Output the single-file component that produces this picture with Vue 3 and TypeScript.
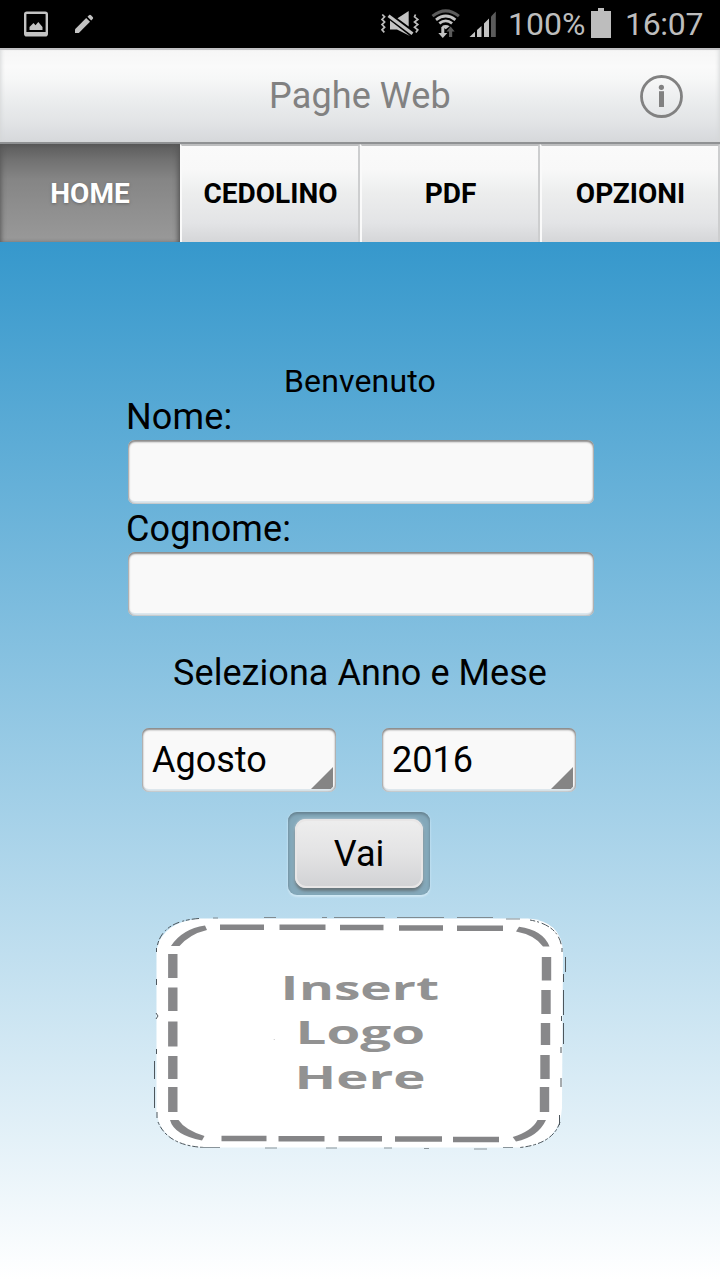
<script setup lang="ts">
import { ref } from 'vue'

const tabs: string[] = ['HOME', 'CEDOLINO', 'PDF', 'OPZIONI']
const active = ref<number>(0)
const nome = ref<string>('')
const cognome = ref<string>('')
const mese = ref<string>('Agosto')
const anno = ref<string>('2016')
</script>

<template>
  <div class="screen">
    <div class="status">
      <svg class="status-left" width="120" height="48" viewBox="0 0 120 48">
        <rect x="25.2" y="12.7" width="21.6" height="22.6" rx="1.6" fill="none" stroke="#c3c3c3" stroke-width="2.4" />
        <path d="M25 32h22v3.6H25z" fill="#c3c3c3" />
        <path d="M29.5 30v-3l4-4 2 2.2 2.8-3.2 4.2 5v3z" fill="#c3c3c3" />
        <path d="M75 29.2 86.2 18l3.8 3.8L78.800 33H75z" fill="#c3c3c3" />
        <path d="M87.500 16.800l1.500-1.500q1-.9 2 0l1.700 1.700q1 1 0 2l-1.500 1.500z" fill="#c3c3c3" />
      </svg>
      <svg class="status-right" width="130" height="48" viewBox="370 0 130 48">
        <g fill="none" stroke="#bdbdbd" stroke-width="1.700">
          <path d="M382.300 14.500l2.300 2.300-2.600 2.600 2.600 2.600-2.600 2.600 2.600 2.600-2.600 2.600 2.300 2.600" />
          <path d="M415.500 14.500l-1 2.300 3.300 2.600-3.300 2.600 3.300 2.600-3.300 2.600 3.300 2.600-2 2.600" />
        </g>
        <path d="M397.500 18.200l11.200-7.200v15.600z" fill="#c3c3c3" />
        <path d="M390 20.500l20 15.500-13-6.500h-7z" fill="#c3c3c3" />
        <path d="M388.500 15.700l24 18" stroke="#c3c3c3" stroke-width="3.200" />
        <path d="M432.500 16.200q13.200-10.600 26.400 0" stroke="#5b5b5b" stroke-width="3" fill="none" />
        <g fill="none" stroke="#c3c3c3" stroke-width="2.800">
          <path d="M436 19.800q9.700-7.600 19.400 0" />
          <path d="M439.300 23.400q6.400-5 12.800 0" />
        </g>
        <path d="M441.700 26.300q4-2.800 8 0l-4 3z" fill="#c3c3c3" />
        <path d="M441.300 27h3v6h3l-4.500 5-4.500-5h3z" fill="#c3c3c3" />
        <path d="M449 37h3.200v-5.500h2.500l-4.100-5-4.100 5H449z" fill="#5b5b5b" />
        <path d="M469.500 37l5.500-5.200V37zM477 30l4.500-4v11H477zM484 23.500l5-5V37h-5z" fill="#c3c3c3" />
        <path d="M491 16.500l4.800-5V37H491z" fill="#5b5b5b" />
      </svg>
      <span class="percent">100%</span>
      <svg class="battery" width="20" height="48" viewBox="0 0 20 48">
        <path d="M0 11h7V8h6v3h7v27H0z" fill="#bdbdbd" />
      </svg>
      <span class="clock">16:07</span>
    </div>

    <header class="header">
      <h1>Paghe Web</h1>
      <svg class="info" width="44" height="44" viewBox="0 0 44 44">
        <circle cx="21.500" cy="21.500" r="20" fill="none" stroke="#818181" stroke-width="2.800" />
        <circle cx="21.400" cy="12.300" r="2.600" fill="#818181" />
        <path d="M19 16.200h5v15.800h-5z" fill="#818181" />
      </svg>
    </header>

    <nav class="tabs">
      <button
        v-for="(tab, i) in tabs"
        :key="tab"
        type="button"
        class="tab"
        :class="{ active: active === i }"
        @click="active = i"
      >{{ tab }}</button>
    </nav>

    <main class="content">
      <p class="welcome">Benvenuto</p>
      <div class="form">
        <label for="nome">Nome:</label>
        <input id="nome" v-model="nome" type="text" class="field" />
        <label for="cognome">Cognome:</label>
        <input id="cognome" v-model="cognome" type="text" class="field" />
      </div>
      <p class="prompt">Seleziona Anno e Mese</p>
      <div class="selects">
        <div class="select">{{ mese }}</div>
        <div class="select">{{ anno }}</div>
      </div>
      <div class="go-frame">
        <button type="button" class="go">Vai</button>
      </div>
      <svg class="logo" width="440" height="260" viewBox="140 900 440 260">
        <path
          d="M200 918.500H528Q561 921 563 951L562 1108Q560 1144 520 1147.500H203Q161 1145 156.500 1112V950Q162 922 200 918.500Z"
          fill="#fff"
        />
        <g fill="none" stroke="#4d565c" stroke-width="1">
          <path d="M157.500 945Q163 921 199 918.500" stroke-dasharray="4 2 7 3 2 2" />
          <path d="M530 920Q558 925 561.500 946" stroke-dasharray="5 2 2 3 8 2" />
          <path d="M158 1122Q168 1146 205 1147.500" stroke-dasharray="3 2 6 2" />
          <path d="M560 1122Q553 1144 520 1147.500" stroke-dasharray="6 2 3 2" />
          <path d="M213 918h5M264 917.500h12M322 917.500h5M334 917.500h51M397 917.500h47M457 917.500h36M506 919h14" stroke="#808b91" />
          <path d="M200 1147.500h20M265 1148h12M326 1148h11M384 1148h8M424 1148.500h5M474 1149h13M503 1147.500h10" stroke="#89949a" />
          <path d="M156.500 948v4M156.500 979v6M156 1013l2 3-2 3M156.500 1049v5M154.500 1061v18M154.500 1087v21M157 1112v6" />
          <path d="M562 948v4M565.500 957v15M563.500 974v8M563.500 990v25M561.500 1016v5M563.500 1023v21M561 1047v6M561 1078v9M559.500 1115v10" />
        </g>
        <g fill="none" stroke="#858587" stroke-width="5.400">
          <path d="M220 927.300h44M279.500 927.300h46M340 927.500h43.500M399 928h44M457 928.300h46" />
          <path d="M221.500 1138.500h45M278.500 1138.700h46M338.500 1138.800h43.500M395 1139h47M453 1139.500h46" />
        </g>
        <g fill="none" stroke="#88888a" stroke-width="9.400">
          <path d="M172.800 954v24M172.800 987.500v23.500M172.800 1021.500v25M172.800 1056v23M172.800 1087v25" />
          <path d="M546.500 957v23.500M546 990v24M545.500 1023v22M545 1055v24M544.500 1087v25" />
        </g>
        <g fill="#858587">
          <path d="M171 946Q182 929 205 925.500L207 930Q190 934 179.500 946Z" />
          <path d="M519 926.800Q543 930 549.500 946.500H543Q535 935 516 931.500Z" />
          <path d="M170 1120H178.500Q185 1130 204.500 1136L202 1140.500Q174 1135 170 1120Z" />
          <path d="M537.500 1120H546Q538 1137 516 1141.500L512.700 1137Q532 1131 537.500 1120Z" />
        </g>
        <path d="M273 1040l2-1v1z" fill="#c8c8c8" />
        <g class="logo-text" fill="#929292">
          <text x="280.500" y="1000" class="logo-cap" textLength="18" lengthAdjust="spacingAndGlyphs">I</text>
          <text x="299" y="1000" textLength="140" lengthAdjust="spacingAndGlyphs">nsert</text>
          <text x="295.500" y="1044" textLength="129.500" lengthAdjust="spacingAndGlyphs">Logo</text>
          <text x="294.500" y="1088.500" textLength="131" lengthAdjust="spacingAndGlyphs">Here</text>
        </g>
      </svg>
    </main>
  </div>
</template>

<style>
body {
  margin: 0;
}
</style>

<style scoped>
.screen {
  width: 720px;
  height: 1280px;
  display: flex;
  flex-direction: column;
  overflow: hidden;
  font-family: Roboto, "Noto Sans", sans-serif;
  color: #000;
}

.status {
  flex: none;
  height: 48px;
  display: flex;
  align-items: center;
  background: #000;
  color: #bdbdbd;
  font-size: 32px;
  line-height: 48px;
}

.status-right {
  margin-left: 250px;
}

.percent {
  width: 83px;
  margin-left: 8px;
  white-space: nowrap;
}

.clock {
  margin-left: 14px;
  letter-spacing: -0.3px;
}

.header {
  box-sizing: border-box;
  flex: none;
  height: 96px;
  display: grid;
  grid-template-columns: 80px 1fr 80px;
  align-items: center;
  border-top: 2px solid #c2c1c4;
  border-bottom: 2px solid #8f9193;
  background: linear-gradient(#f6f6f6 0, #fafafa 18%, #f6f7f7 32%, #ebedee 55%, #e2e4e6 78%, #d6d8db 100%);
  box-shadow: inset 4px 0 4px -3px #d4d6d7, inset -4px 0 4px -3px #d4d6d7;
}

h1 {
  grid-column: 2;
  margin: 0;
  text-align: center;
  font-size: 36px;
  font-weight: 400;
  line-height: 48px;
  letter-spacing: 0.1px;
  color: #818181;
}

.info {
  margin-top: 1px;
}

.tabs {
  flex: none;
  height: 98px;
  display: grid;
  grid-template-columns: repeat(4, 1fr);
}

.tab {
  border: 0;
  border-top: 2px solid #bdbebf;
  border-left: 2px solid #fafafa;
  border-right: 2px solid #cdcecf;
  padding: 0 0 0 1px;
  background: linear-gradient(#fafafa, #f8f8f8 25%, #eceded 50%, #e3e4e6 80%, #d5d6d8);
  font: 700 28px/1 Roboto, "Noto Sans", sans-serif;
  color: #000;
}

.tab.active {
  border: 0;
  padding: 2px 0 0;
  background: linear-gradient(#5b5b5b, #717171 16%, #858585 36%, #909090 70%, #999);
  box-shadow: inset -4px 0 5px -2px #555, inset 4px 0 5px -3px #555;
  color: #fff;
  text-shadow: 0 1px 3px #666;
}

.content {
  flex: 1;
  display: flex;
  flex-direction: column;
  align-items: center;
  background: linear-gradient(#3698cc, #fff);
}

.welcome {
  margin: 120px 0 0;
  font-size: 32px;
  line-height: 38px;
  letter-spacing: 0.15px;
}

.form {
  width: 468px;
  display: flex;
  flex-direction: column;
}

label {
  margin-bottom: 6px;
  font-size: 36px;
  line-height: 34px;
  letter-spacing: 0.15px;
}

.field,
.select {
  box-sizing: border-box;
  border: 0;
  border-radius: 7px;
  background: #f9f9f9;
  box-shadow: inset 0 2px 2px #8c8c8c, inset 1px 0 2px #aaa, inset -1px 0 2px #aaa, inset 0 -3px 0 #dde7ed;
}

.field {
  width: 466px;
  height: 64px;
  margin: 0 0 8px 2px;
  padding: 0 10px;
  outline: none;
  font: 36px Roboto, "Noto Sans", sans-serif;
}

.prompt {
  margin: 28px 0 34px;
  font-size: 36px;
  line-height: 42px;
  letter-spacing: 0.05px;
}

.selects {
  display: flex;
  gap: 46px;
  margin-right: 2px;
}

.select {
  width: 194px;
  height: 64px;
  padding-left: 10px;
  font-size: 36px;
  line-height: 65px;
  position: relative;
}

.select::after {
  content: "";
  position: absolute;
  right: 3px;
  bottom: 3px;
  width: 22px;
  height: 22px;
  background: #858585;
  clip-path: polygon(100% 0, 100% 90%, 90% 100%, 0 100%);
}

.go-frame {
  box-sizing: border-box;
  width: 142px;
  height: 83px;
  margin: 20px 2px 0 0;
  padding: 7px;
  border-radius: 9px;
  background: #84a8ba;
  box-shadow: inset 0 2px 3px #65818f, 0 2px 2px #d0e8f5, 0 0 2px #c7e2f0;
}

.go {
  box-sizing: border-box;
  width: 128px;
  height: 69px;
  border: 0;
  border-radius: 11px;
  padding: 2px 0 0;
  background: linear-gradient(#eee, #e3e3e4 50%, #d1d2d4);
  box-shadow: inset 0 0 0 2px #e8e6e6, 0 3px 3px #68777d, 0 0 3px #c3d1d9;
  font: 36px/67px Roboto, "Noto Sans", sans-serif;
  color: #000;
}

.logo {
  flex: none;
  margin-top: 5px;
}

.logo-text {
  font-family: "Open Sans", "Noto Sans", sans-serif;
  font-weight: 700;
  font-size: 32.500px;
}

.logo-cap {
  font-family: Lato, sans-serif;
}
</style>
